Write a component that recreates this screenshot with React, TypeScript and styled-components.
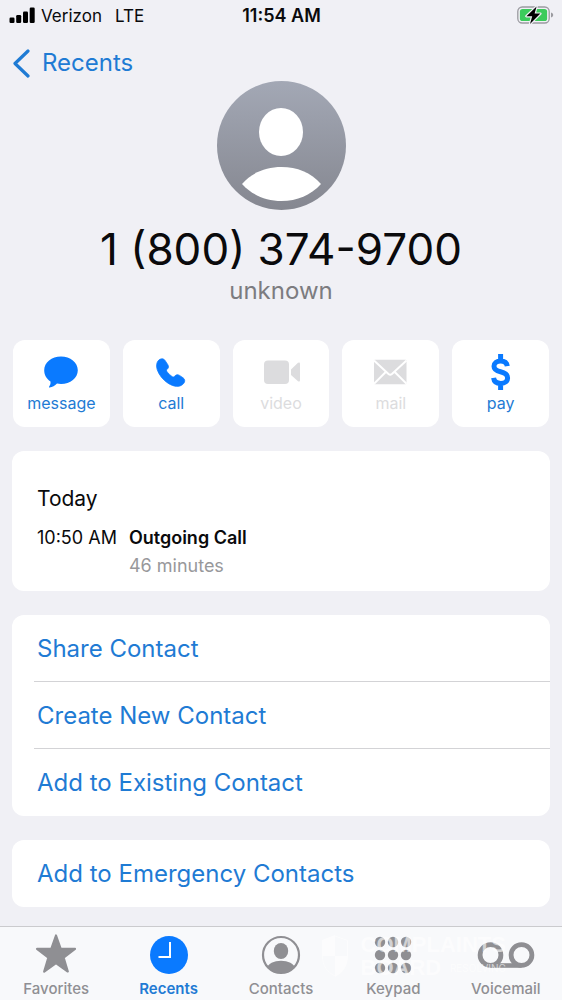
import React from "react";
import styled, { createGlobalStyle } from "styled-components";

const blue = "#0a7aff";
const linkBlue = "#1f7bd4";
const grey = "#8f8f93";

const GlobalStyle = createGlobalStyle`
  * { box-sizing: border-box; }
  body {
    margin: 0;
    background: #f0f0f5;
    color: #0a0a0c;
    font-family: Inter, "Liberation Sans", sans-serif;
  }
  button, a { font: inherit; -webkit-tap-highlight-color: transparent; }
  svg { display: block; flex: none; }
`;

const Page = styled.div`
  min-height: 100vh;
  display: flex;
  flex-direction: column;
`;

const StatusBar = styled.div`
  display: grid;
  grid-template-columns: 1fr auto 1fr;
  align-items: center;
  height: 31px;
  padding: 0 8px 0 9px;
  font-size: 17px;
  line-height: 20px;
`;

const Carrier = styled.div`
  display: flex;
  align-items: center;
  gap: 6px;
`;

const Network = styled.span`
  margin-left: 7px;
`;

const Clock = styled.time`
  font-size: 18px;
  font-weight: 600;
`;

const BatterySlot = styled.div`
  justify-self: end;
`;

const NavBar = styled.nav`
  display: flex;
  padding: 14px 12px 0;
`;

const BackLink = styled.a`
  display: flex;
  align-items: center;
  gap: 12px;
  height: 36px;
  color: ${linkBlue};
  font-size: 24px;
  line-height: 30px;
  text-decoration: none;
`;

const Main = styled.main`
  flex: 1;
  padding: 0 12px 19px;
  display: flex;
  flex-direction: column;
  gap: 24px;
`;

const Header = styled.header`
  display: flex;
  flex-direction: column;
  align-items: center;
  margin-bottom: 10px;
`;

const PhoneNumber = styled.h1`
  margin: 12px 0 0;
  font-size: 44px;
  font-weight: 400;
  line-height: 54px;
`;

const CallerLabel = styled.p`
  margin: 0;
  color: #7c7c80;
  font-size: 24px;
  line-height: 30px;
`;

const Actions = styled.div`
  display: grid;
  grid-template-columns: repeat(5, 1fr);
  gap: 13px;
  padding: 0 1px;
`;

const ActionButton = styled.button`
  display: flex;
  flex-direction: column;
  align-items: center;
  gap: 1px;
  height: 87px;
  padding: 12px 0 0;
  border: 0;
  border-radius: 12px;
  background: #fff;
  color: ${linkBlue};
  font-size: 16px;
  line-height: 20px;
  cursor: pointer;

  svg { color: ${blue}; }

  &:disabled {
    color: #dcdcde;
    cursor: default;
  }
  &:disabled svg { color: #dcdcde; }
`;

const Card = styled.section`
  border-radius: 12px;
  background: #fff;
  overflow: hidden;
`;

const HistoryCard = styled(Card)`
  padding: 36px 25px 11px;
`;

const DayTitle = styled.h2`
  margin: 0 0 13px;
  font-size: 21px;
  font-weight: 400;
  line-height: 24px;
`;

const CallEntry = styled.div`
  display: flex;
  gap: 12px;
  font-size: 18px;
  line-height: 28px;
`;

const CallKind = styled.div`
  font-weight: 600;
`;

const CallLength = styled.div`
  color: #98989b;
`;

const LinkRow = styled.button`
  display: block;
  width: 100%;
  height: 67px;
  padding: 0 0 0 22px;
  border: 0;
  background: none;
  color: ${linkBlue};
  font-size: 24px;
  line-height: 30px;
  text-align: left;
  cursor: pointer;
`;

const RowLabel = styled.span<{ $divided?: boolean }>`
  display: flex;
  align-items: center;
  height: 100%;
  padding-left: 3px;
  box-shadow: ${(p) => (p.$divided ? "inset 0 -1px #d3d3d6" : "none")};
`;

const TabBar = styled.nav`
  position: relative;
  display: grid;
  grid-template-columns: repeat(5, 1fr);
  padding: 5px 0 2px;
  border-top: 1px solid #cbcbce;
  background: #f8f9fb;
`;

const Tab = styled.a<{ $active?: boolean }>`
  display: flex;
  flex-direction: column;
  align-items: center;
  gap: 4px;
  color: ${(p) => (p.$active ? linkBlue : grey)};
  font-size: 15px;
  font-weight: ${(p) => (p.$active ? 600 : 500)};
  line-height: 18px;
  text-decoration: none;

  svg { color: ${(p) => (p.$active ? blue : grey)}; }
`;

const Watermark = styled.div`
  position: absolute;
  top: 6px;
  right: 56px;
  display: flex;
  align-items: center;
  gap: 12px;
  color: #fff;
  opacity: 0.6;
  pointer-events: none;
`;

const WatermarkName = styled.div`
  font-family: "Liberation Sans", Arial, sans-serif;
  font-size: 22px;
  font-weight: 700;
  line-height: 23px;
`;

const WatermarkLine = styled.div`
  display: flex;
  align-items: center;
  justify-content: space-between;
`;

const WatermarkTag = styled.span`
  font-size: 10px;
  line-height: 10px;
`;

const SignalIcon = () => (
  <svg width="26" height="17" viewBox="0 0 26 17" fill="#000" aria-hidden="true">
    <rect x="0.5" y="10.5" width="5" height="5.5" rx="1.2" />
    <rect x="7.2" y="8" width="5" height="8" rx="1.2" />
    <rect x="14" y="4.5" width="5" height="11.5" rx="1.2" />
    <rect x="20.7" y="0.5" width="5" height="15.5" rx="1.2" />
  </svg>
);

const BatteryIcon = () => (
  <svg width="37" height="20" viewBox="0 0 37 20" role="img" aria-label="Battery charging">
    <rect x="0.8" y="1" width="31.4" height="16" rx="4.5" fill="none" stroke="#9b9ba0" strokeWidth="1.3" />
    <rect x="2.9" y="3" width="27.2" height="12" rx="2.6" fill="#3ccb5c" />
    <path d="M34 6.5c1.6.5 2.200 1.400 2.200 2.500s-.6 2-2.200 2.500z" fill="#9b9ba0" />
    <path d="M19.600 0.500 9.400 10.200h5.800L13 18 23.400 7.600h-5.800z" fill="#000" stroke="#f0f0f5" strokeWidth="2.4" paintOrder="stroke" strokeLinejoin="round" />
  </svg>
);

const BackIcon = () => (
  <svg width="18" height="29" viewBox="0 0 18 29" fill="none" stroke={linkBlue} strokeWidth="3.2" strokeLinecap="round" strokeLinejoin="round" aria-hidden="true">
    <path d="M16 2 3 14.500 16 27" />
  </svg>
);

const Avatar = () => (
  <svg width="129" height="129" viewBox="0 0 129 129" role="img" aria-label="Contact photo">
    <defs>
      <linearGradient id="avatar" x1="0" y1="0" x2="0" y2="1">
        <stop offset="0" stopColor="#a3a8b5" />
        <stop offset="1" stopColor="#858790" />
      </linearGradient>
    </defs>
    <circle cx="64.5" cy="64.5" r="64.5" fill="url(#avatar)" />
    <ellipse cx="64" cy="51" rx="22" ry="24" fill="#fff" />
    <path d="M25 103C35 91.500 49 86 64.500 86S94 91.500 104 103C94 114 80 120 64.500 120S35 114 25 103Z" fill="#fff" />
  </svg>
);

const ActionIcon = ({ children }: { children: React.ReactNode }) => (
  <svg width="40" height="40" viewBox="0 0 40 40" fill="currentColor" aria-hidden="true">
    {children}
  </svg>
);

const TabIcon = ({ width = 44, children }: { width?: number; children: React.ReactNode }) => (
  <svg width={width} height="44" viewBox={`0 0 ${width} 44`} fill="currentColor" aria-hidden="true">
    {children}
  </svg>
);

const actions = [
  {
    label: "message",
    icon: (
      <path d="M20 4.600C29.300 4.600 36.800 10.600 36.800 18.300S29.300 32 20 32C18.500 32 17.300 31.900 16 31.600C13.800 33.700 11.500 35.300 8.600 35.600C7.800 35.600 7.700 35 8.200 34.400C9.300 33 9.700 31.500 9.500 29.500C5.600 27 3.200 23 3.200 18.300C3.200 10.600 10.700 4.600 20 4.600Z" />
    ),
  },
  {
    label: "call",
    icon: (
      <path d="M7 9C8.800 6.600 12.100 5.900 14 8.400L16.800 12.700C18 14.800 17.500 16.100 16 17.300C15.200 18.200 15.400 19 16.400 20.200C17.900 22 19.400 23.400 21 24.500C22.200 25.300 22.700 25.200 23.700 24.200C25.200 22.600 26.600 22.300 28.500 23.400L32.200 25.900C34.600 27.800 33.900 30.500 31.600 32.500C28.100 35.400 23 34.800 17.300 31.400C12 28 8 23 6.200 17.600C5.200 14.200 5.500 11 7 9Z" stroke="currentColor" strokeWidth="0.800" />
    ),
  },
  {
    label: "video",
    disabled: true,
    icon: (
      <>
        <rect x="3" y="8.500" width="25" height="23.500" rx="4" />
        <path d="M30 17.500 37 10.800Q39 9.600 39 11.800V28.200Q39 30.400 37 29.200L30 23Z" />
      </>
    ),
  },
  {
    label: "mail",
    disabled: true,
    icon: (
      <>
        <rect x="3" y="7.800" width="32.500" height="24.400" rx="1" />
        <path d="M3 8.500 17.500 22Q19.200 23.500 20.900 22L35.500 8.500M3 31.800 15 19.800M35.500 31.800 23.500 19.800" fill="none" stroke="#fff" strokeWidth="2" />
      </>
    ),
  },
  {
    label: "pay",
    icon: (
      <path d="M26.300 14.200C25.800 10.900 23.400 9 19.600 9C15.700 9 13 11 13 14.200C13 17.300 15 18.700 19.500 19.800C24.500 21 26.600 22.700 26.600 25.900C26.600 29.300 24 31.400 19.800 31.400C15.600 31.400 13 29.500 12.600 25.900M19.600 2V9M19.600 31.400V38" fill="none" stroke="currentColor" strokeWidth="5" />
    ),
  },
];

const dots = [10, 23, 36].flatMap((cy) => [9, 22, 35].map((cx) => ({ cx, cy })));

const tabs = [
  {
    label: "Favorites",
    icon: (
      <TabIcon>
        <path d="M22 3.500 26.600 16.600 41 16.900 29.600 25.500 33.800 39.500 22 31.200 10.200 39.500 14.400 25.500 3 16.900 17.400 16.600Z" stroke="currentColor" strokeWidth="2.200" strokeLinejoin="round" />
      </TabIcon>
    ),
  },
  {
    label: "Recents",
    active: true,
    icon: (
      <TabIcon>
        <circle cx="22" cy="23" r="19" />
        <path d="M23 10V25H11.500" fill="none" stroke="#fff" strokeWidth="2" />
      </TabIcon>
    ),
  },
  {
    label: "Contacts",
    icon: (
      <TabIcon>
        <clipPath id="person">
          <circle cx="22" cy="23" r="18" />
        </clipPath>
        <circle cx="22" cy="23" r="18" fill="none" stroke="currentColor" strokeWidth="2.200" />
        <ellipse cx="22" cy="19" rx="7.200" ry="8" />
        <path d="M7 37C9 31.500 15 28.700 22 28.700S35 31.500 37 37L30 43H14Z" clipPath="url(#person)" />
      </TabIcon>
    ),
  },
  {
    label: "Keypad",
    icon: (
      <TabIcon>
        {dots.map((dot) => (
          <circle key={`${dot.cx}-${dot.cy}`} cx={dot.cx} cy={dot.cy} r="5.200" />
        ))}
      </TabIcon>
    ),
  },
  {
    label: "Voicemail",
    icon: (
      <TabIcon width={60}>
        <path d="M14.500 33.500H45.500" fill="none" stroke="currentColor" strokeWidth="4.600" />
        <circle cx="14.500" cy="23" r="10.400" fill="none" stroke="currentColor" strokeWidth="4.800" />
        <circle cx="45.500" cy="23" r="10.400" fill="none" stroke="currentColor" strokeWidth="4.800" />
      </TabIcon>
    ),
  },
];

export default function App() {
  return (
    <>
      <GlobalStyle />
      <Page>
        <StatusBar>
          <Carrier>
            <SignalIcon />
            <span>Verizon</span>
            <Network>LTE</Network>
          </Carrier>
          <Clock>11:54 AM</Clock>
          <BatterySlot>
            <BatteryIcon />
          </BatterySlot>
        </StatusBar>
        <NavBar>
          <BackLink href="#recents">
            <BackIcon />
            Recents
          </BackLink>
        </NavBar>
        <Main>
          <Header>
            <Avatar />
            <PhoneNumber>1 (800) 374-9700</PhoneNumber>
            <CallerLabel>unknown</CallerLabel>
          </Header>
          <Actions>
            {actions.map((action) => (
              <ActionButton key={action.label} type="button" disabled={action.disabled}>
                <ActionIcon>{action.icon}</ActionIcon>
                {action.label}
              </ActionButton>
            ))}
          </Actions>
          <HistoryCard>
            <DayTitle>Today</DayTitle>
            <CallEntry>
              <time>10:50 AM</time>
              <div>
                <CallKind>Outgoing Call</CallKind>
                <CallLength>46 minutes</CallLength>
              </div>
            </CallEntry>
          </HistoryCard>
          <Card>
            <LinkRow type="button">
              <RowLabel $divided>Share Contact</RowLabel>
            </LinkRow>
            <LinkRow type="button">
              <RowLabel $divided>Create New Contact</RowLabel>
            </LinkRow>
            <LinkRow type="button">
              <RowLabel>Add to Existing Contact</RowLabel>
            </LinkRow>
          </Card>
          <Card>
            <LinkRow type="button">
              <RowLabel>Add to Emergency Contacts</RowLabel>
            </LinkRow>
          </Card>
        </Main>
        <TabBar>
          {tabs.map((tab) => (
            <Tab key={tab.label} href={`#${tab.label.toLowerCase()}`} $active={tab.active}>
              {tab.icon}
              {tab.label}
            </Tab>
          ))}
          <Watermark aria-hidden="true">
            <svg width="28" height="42" viewBox="0 0 28 42" fill="#fff">
              <path d="M1 5 14 0V21H1ZM14 21H27C27 31 22 38 14 42Z" />
              <path d="M14 1 26.500 5.500V21M1.500 21C1.500 31 6 37 14 41" fill="none" stroke="#fff" />
            </svg>
            <div>
              <WatermarkName>COMPLAINTS</WatermarkName>
              <WatermarkLine>
                <WatermarkName>BOARD</WatermarkName>
                <WatermarkTag>RESOLVING</WatermarkTag>
              </WatermarkLine>
            </div>
          </Watermark>
        </TabBar>
      </Page>
    </>
  );
}
